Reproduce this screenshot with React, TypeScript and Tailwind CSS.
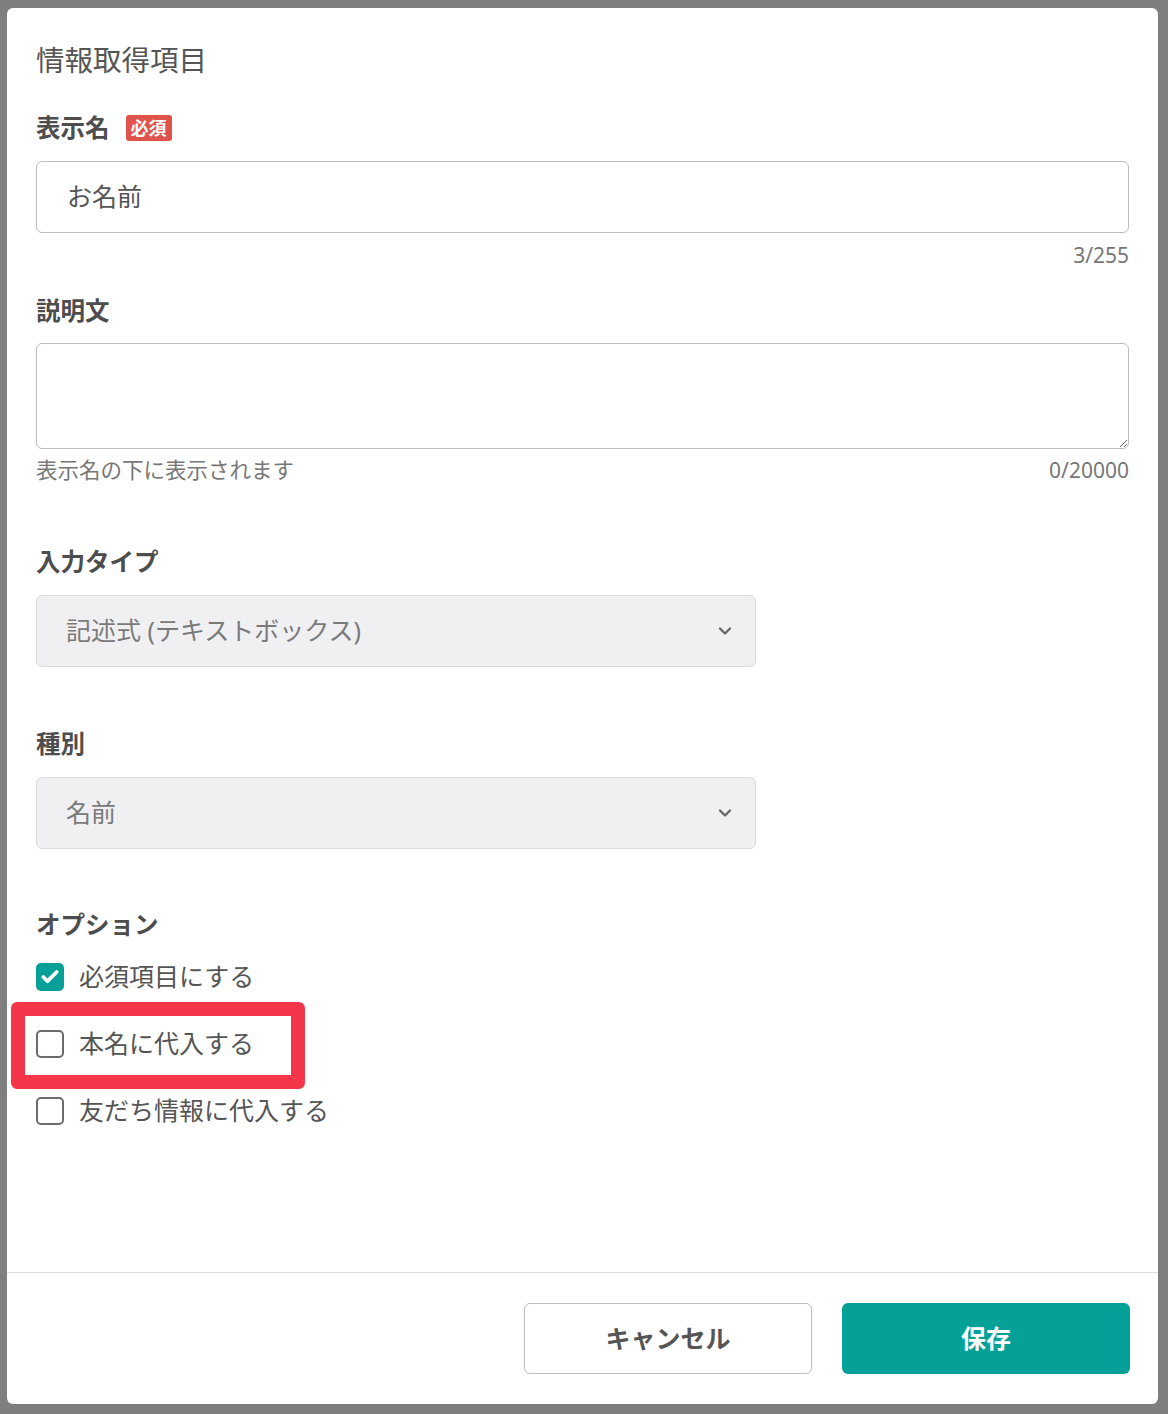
// 情報取得項目の編集モーダル
import { Check, ChevronDown } from "lucide-react"

const font = "font-['Noto_Sans','Noto_Sans_CJK_JP',sans-serif]"

function FieldLabel({ children }: { children: React.ReactNode }) {
  return <div className="text-[24.5px] leading-[32px] font-bold text-[#4d4d4d]">{children}</div>
}

function SelectBox({ value }: { value: string }) {
  return (
    <div className="mt-[17px] w-[720px] h-[72px] rounded-[6px] border border-[#dcdcdc] bg-[#f0f0f2] flex items-center justify-between pl-[29px] pr-[20px]">
      <span className="text-[25px] text-[#7a7a7a]">{value}</span>
      <ChevronDown className="w-[20px] h-[20px] text-[#666]" strokeWidth={2.8} />
    </div>
  )
}

function CheckRow({ checked, label }: { checked?: boolean; label: string }) {
  return (
    <label className="flex items-center gap-[15px] h-[36px]">
      {checked ? (
        <span className="w-[28px] h-[28px] rounded-[5px] bg-[#06a099] flex items-center justify-center">
          <Check className="w-[20px] h-[20px] text-white" strokeWidth={4.5} />
        </span>
      ) : (
        <span className="w-[28px] h-[28px] rounded-[5px] border-2 border-[#6b6b6b] bg-white" />
      )}
      <span className="text-[25px] text-[#555]">{label}</span>
    </label>
  )
}

export default function App() {
  return (
    <div className={`${font} w-[1168px] h-[1414px] bg-[#7f7f7f] pt-[8px] pl-[7px] pr-[10px] pb-[10px]`}>
      <div className="h-full bg-white rounded-[6px] flex flex-col">
        {/* 本文 */}
        <div className="flex-1 px-[29px] pt-[32px] relative">
          <h1 className="text-[28.5px] leading-[40px] text-[#555]">情報取得項目</h1>

          <div className="mt-[32px] flex items-center gap-[16px]">
            <FieldLabel>表示名</FieldLabel>
            <span className="bg-[#e0534a] text-white text-[18px] font-bold leading-[26px] px-[5px] rounded-[3px]">必須</span>
          </div>
          <div className="mt-[17px] h-[72px] rounded-[6px] border border-[#bdbdbd] flex items-center px-[30px]">
            <span className="text-[25px] text-[#555]">お名前</span>
          </div>
          <div className="mt-[8px] text-right text-[21px] leading-[28px] text-[#777]">3/255</div>

          <div className="mt-[26px]">
            <FieldLabel>説明文</FieldLabel>
          </div>
          <textarea className="mt-[16px] block w-full h-[106px] rounded-[6px] border border-[#bdbdbd] resize-y outline-none" />
          <div className="mt-[8px] flex justify-between text-[21.5px] leading-[26px] text-[#777]">
            <span>表示名の下に表示されます</span>
            <span className="text-[21px]">0/20000</span>
          </div>

          <div className="mt-[63px]">
            <FieldLabel>入力タイプ</FieldLabel>
          </div>
          <SelectBox value="記述式 (テキストボックス)" />

          <div className="mt-[61px]">
            <FieldLabel>種別</FieldLabel>
          </div>
          <SelectBox value="名前" />

          <div className="mt-[60px]">
            <FieldLabel>オプション</FieldLabel>
          </div>
          <div className="mt-[18px] flex flex-col gap-[31px]">
            <CheckRow checked label="必須項目にする" />
            <CheckRow label="本名に代入する" />
            <CheckRow label="友だち情報に代入する" />
          </div>

          {/* 注釈の赤枠 */}
          <div className="absolute left-[4px] top-[994px] w-[294px] h-[87px] border-[14px] border-[#f4364b] rounded-[6px]" />
        </div>

        {/* フッター */}
        <div className="border-t border-[#e0e0e0] px-[28px] py-[30px] flex justify-end gap-[30px]">
          <button className="w-[288px] h-[71px] rounded-[6px] border border-[#bdbdbd] bg-white text-[25px] font-bold text-[#555]">
            キャンセル
          </button>
          <button className="w-[288px] h-[71px] rounded-[6px] bg-[#05a199] text-[25px] font-bold text-white">
            保存
          </button>
        </div>
      </div>
    </div>
  )
}
